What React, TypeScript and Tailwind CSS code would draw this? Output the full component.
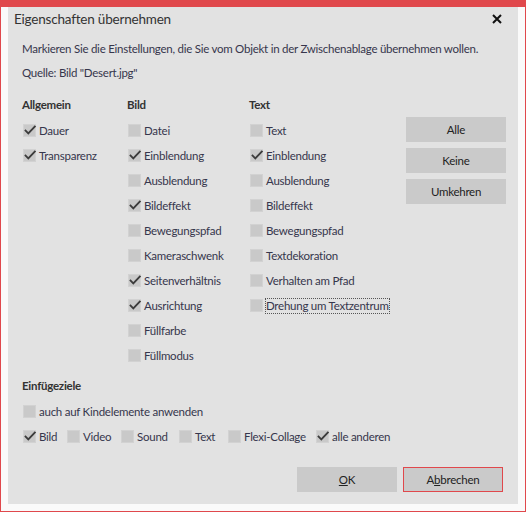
import React from "react";

const Check = () => (
  <svg width="14" height="13" viewBox="0 0 14 13" className="absolute left-[-1px] top-[-1px]">
    <path d="M2.6 6.6 L5.3 9.3 L11.8 2.6" stroke="#3c3c3c" strokeWidth="1.9" fill="none" strokeLinecap="square" />
  </svg>
);

function Box({ checked }: { checked?: boolean }) {
  return (
    <span className="relative ml-[1px] inline-block h-[13px] w-[13px] shrink-0 border border-[#d2d2d2] bg-[#c9c9c9]">
      {checked && <Check />}
    </span>
  );
}

function Item({ label, checked, focus, w }: { label: string; checked?: boolean; focus?: boolean; w?: string }) {
  return (
    <div className={`flex h-[25px] items-center whitespace-nowrap ${w ?? ""}`}>
      <Box checked={checked} />
      {focus ? (
        <span className="ml-[2px] border border-dotted border-[#555] leading-[14px]">{label}</span>
      ) : (
        <span className="ml-[3px]">{label}</span>
      )}
    </div>
  );
}

export default function App() {
  return (
    <div className="flex h-[512px] w-[526px] flex-col bg-[#e0484c] px-[1px] pb-[1px] pt-[7px] font-[Lato,'Liberation_Sans',sans-serif] text-[11.5px] tracking-[-0.25px] text-[#36364c]">
      <div className="flex flex-1 flex-col bg-[#fafafa] px-[7px] pb-[7px]">
        <div className="flex flex-1 flex-col bg-[#e2e2e2]">
          <div className="flex h-[24px] items-center justify-between pl-[6px] pr-[16px]">
            <span className="text-[13.5px] tracking-[-0.2px] text-[#333]">Eigenschaften übernehmen</span>
            <svg width="10" height="10" viewBox="0 0 10 10">
              <path d="M1 1 L9 9 M9 1 L1 9" stroke="#111" strokeWidth="2" />
            </svg>
          </div>
          <div className="pl-[14px] pr-[12px]">
            <div className="mt-[10px] h-[16px] whitespace-nowrap leading-[16px]">
              Markieren Sie die Einstellungen, die Sie vom Objekt in der Zwischenablage übernehmen wollen.
            </div>
            <div className="mt-[8px] h-[16px] leading-[16px]">Quelle: Bild "Desert.jpg"</div>

            <div className="mt-[16px] flex">
              <div className="w-[105px]">
                <div className="h-[17px] font-bold leading-[16px] text-[#333]">Allgemein</div>
                <div className="mt-[4px]">
                  <Item label="Dauer" checked />
                  <Item label="Transparenz" checked />
                </div>
              </div>
              <div className="w-[122px]">
                <div className="h-[17px] font-bold leading-[16px] text-[#333]">Bild</div>
                <div className="mt-[4px]">
                  <Item label="Datei" />
                  <Item label="Einblendung" checked />
                  <Item label="Ausblendung" />
                  <Item label="Bildeffekt" checked />
                  <Item label="Bewegungspfad" />
                  <Item label="Kameraschwenk" />
                  <Item label="Seitenverhältnis" checked />
                  <Item label="Ausrichtung" checked />
                  <Item label="Füllfarbe" />
                  <Item label="Füllmodus" />
                </div>
              </div>
              <div className="w-[157px]">
                <div className="h-[17px] font-bold leading-[16px] text-[#333]">Text</div>
                <div className="mt-[4px]">
                  <Item label="Text" />
                  <Item label="Einblendung" checked />
                  <Item label="Ausblendung" />
                  <Item label="Bildeffekt" />
                  <Item label="Bewegungspfad" />
                  <Item label="Textdekoration" />
                  <Item label="Verhalten am Pfad" />
                  <Item label="Drehung um Textzentrum" focus />
                </div>
              </div>
              <div className="mt-[20px] flex flex-col gap-[6px]">
                <button className="h-[25px] w-[100px] bg-[#cacaca] text-[#222]">Alle</button>
                <button className="h-[25px] w-[100px] bg-[#cacaca] text-[#222]">Keine</button>
                <button className="h-[25px] w-[100px] bg-[#cacaca] text-[#222]">Umkehren</button>
              </div>
            </div>

            <div className="mt-[10px] h-[16px] font-bold leading-[16px] text-[#333]">Einfügeziele</div>
            <div className="mt-[5px]">
              <Item label="auch auf Kindelemente anwenden" />
              <div className="flex">
                <Item label="Bild" checked w="w-[44px]" />
                <Item label="Video" w="w-[54px]" />
                <Item label="Sound" w="w-[58px]" />
                <Item label="Text" w="w-[49px]" />
                <Item label="Flexi-Collage" w="w-[88px]" />
                <Item label="alle anderen" checked />
              </div>
            </div>
          </div>
          <div className="mt-auto flex justify-end gap-[6px] pb-[12px] pr-[15px]">
            <button className="h-[25px] w-[100px] bg-[#cacaca] text-[#222]">
              <span className="underline">O</span>K
            </button>
            <button className="h-[25px] w-[100px] border border-[#e0484c] bg-[#cacaca] text-[#222]">
              A<span className="underline">b</span>brechen
            </button>
          </div>
        </div>
      </div>
    </div>
  );
}
